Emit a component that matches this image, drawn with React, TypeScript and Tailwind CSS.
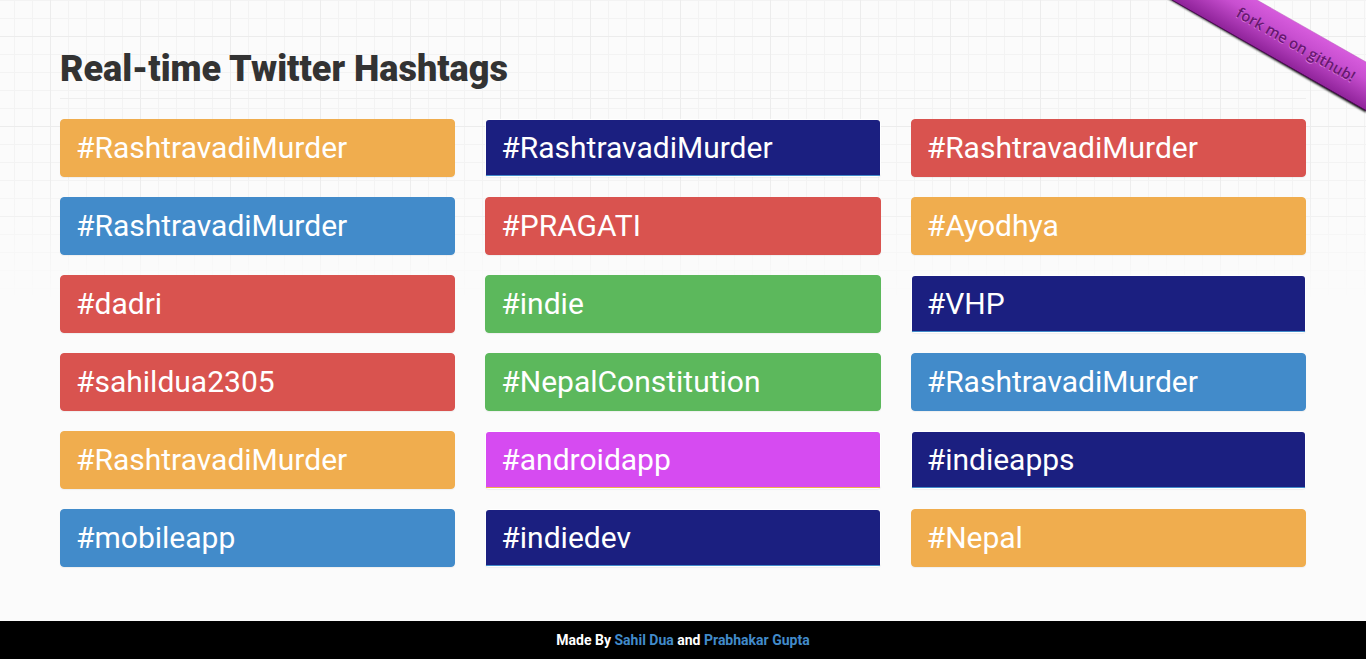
type Tone = "orange" | "navy" | "red" | "blue" | "green" | "pink";

const panels: Record<Tone, string> = {
  orange: "border-[#f0ad4e] bg-[#f0ad4e]",
  navy: "border-white bg-white",
  red: "border-[#d9534f] bg-[#d9534f]",
  blue: "border-[#428bca] bg-[#428bca]",
  green: "border-[#5cb85c] bg-[#5cb85c]",
  pink: "border-white bg-white",
};

const headings: Record<Tone, string> = {
  orange: "border-[#f0ad4e] bg-[#f0ad4e]",
  navy: "border-[#428bca] bg-[#1b1f80]",
  red: "border-[#d9534f] bg-[#d9534f]",
  blue: "border-[#428bca] bg-[#428bca]",
  green: "border-[#5cb85c] bg-[#5cb85c]",
  pink: "border-[#f0ad4e] bg-[#d64bf1]",
};

const hashtags: [string, Tone][] = [
  ["#RashtravadiMurder", "orange"],
  ["#RashtravadiMurder", "navy"],
  ["#RashtravadiMurder", "red"],
  ["#RashtravadiMurder", "blue"],
  ["#PRAGATI", "red"],
  ["#Ayodhya", "orange"],
  ["#dadri", "red"],
  ["#indie", "green"],
  ["#VHP", "navy"],
  ["#sahildua2305", "red"],
  ["#NepalConstitution", "green"],
  ["#RashtravadiMurder", "blue"],
  ["#RashtravadiMurder", "orange"],
  ["#androidapp", "pink"],
  ["#indieapps", "navy"],
  ["#mobileapp", "blue"],
  ["#indiedev", "navy"],
  ["#Nepal", "orange"],
];

function GridBackdrop() {
  return (
    <svg
      aria-hidden="true"
      className="pointer-events-none absolute inset-x-0 top-0 -z-10 h-80 w-full [mask-image:linear-gradient(to_bottom,black_180px,transparent_300px)]"
    >
      <defs>
        <pattern id="minor" x="14" y="0" width="18" height="18" patternUnits="userSpaceOnUse">
          <path d="M0 0h18v1H1v17H0z" fill="#f3f3f3" />
        </pattern>
        <pattern id="major" x="50" y="36" width="90" height="90" patternUnits="userSpaceOnUse">
          <path d="M0 0h90v1H1v89H0z" fill="#ececec" />
        </pattern>
      </defs>
      <rect width="100%" height="100%" fill="url(#minor)" />
      <rect width="100%" height="100%" fill="url(#major)" />
    </svg>
  );
}

function ForkRibbon() {
  return (
    <a href="#fork" aria-label="fork me on github!" className="absolute top-0 right-0">
      <svg width="206" height="120" viewBox="0 0 206 120" className="block">
        <defs>
          <linearGradient id="ribbon" gradientUnits="userSpaceOnUse" x1="150" y1="31" x2="127" y2="71">
            <stop offset="0" stopColor="#d65bdc" />
            <stop offset="0.3" stopColor="#c84fd0" />
            <stop offset="1" stopColor="#851b90" />
          </linearGradient>
          <filter id="soft" x="-10%" y="-10%" width="120%" height="120%">
            <feGaussianBlur stdDeviation="0.8" />
          </filter>
        </defs>
        <path d="M8 -2 206 112V108L14 -2z" fill="#000" stroke="#000" strokeWidth="1" filter="url(#soft)" />
        <path d="M12 0H97L206 62V110.5z" fill="url(#ribbon)" />
        <path d="M97 0 206 62" stroke="#b75abc" strokeWidth="1" strokeOpacity="0.5" />
        <path d="M12 0 206 110.5" stroke="#4c0c54" strokeWidth="1" />
        <g
          transform="translate(75 16) rotate(29.7)"
          fontFamily="'Open Sans', sans-serif"
          fontSize="15"
          fontWeight="600"
        >
          <text x="0" y="1" fill="#d979de">fork me on github!</text>
          <text x="0" y="0" fill="#681771">fork me on github!</text>
        </g>
      </svg>
    </a>
  );
}

export default function App() {
  return (
    <div className="relative isolate flex min-h-screen flex-col overflow-hidden bg-[#fbfbfb] font-['Roboto',sans-serif] text-[#333]">
      <GridBackdrop />
      <ForkRibbon />
      <main className="grow px-[60px] pt-12 pb-8">
        <header className="mb-5 border-b border-[#eee] pb-2">
          <h1 className="text-[36px] leading-[42px] font-black">Real-time Twitter Hashtags</h1>
        </header>
        <ul className="grid grid-cols-1 gap-x-[30px] gap-y-5 md:grid-cols-3">
          {hashtags.map(([label, tone], i) => (
            <li
              key={i}
              className={`min-w-0 rounded-[4px] border shadow-[0_1px_1px_rgba(0,0,0,0.05)] ${panels[tone]}`}
            >
              <h3
                className={`truncate rounded-t-[3px] border-b px-[15px] pt-[10px] pb-[9px] text-[30px] leading-9 text-white ${headings[tone]} ${tone === "navy" || tone === "pink" ? "" : "rounded-b-[3px]"}`}
              >
                {label}
              </h3>
            </li>
          ))}
        </ul>
      </main>
      <footer className="bg-black py-[9px] text-center text-sm font-bold text-white">
        Made By{" "}
        <a href="#sahil-dua" className="text-[#428bca]">Sahil Dua</a>
        {" "}and{" "}
        <a href="#prabhakar-gupta" className="text-[#428bca]">Prabhakar Gupta</a>
      </footer>
    </div>
  );
}
